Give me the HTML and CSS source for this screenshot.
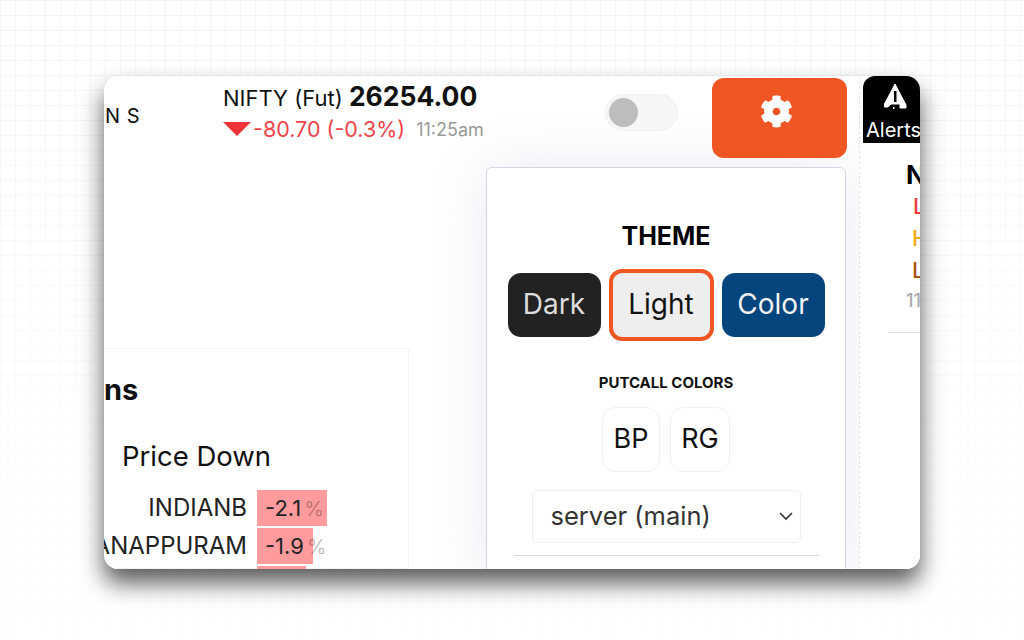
FILE: index.html
```html
<!DOCTYPE html>
<html lang="en">
<head>
  <meta charset="UTF-8"/>
  <title>Settings</title>
  <link rel="stylesheet" href="styles.css">
</head>
<body>
  <div class="window">
    <!-- left column: quote + movers -->
    <div class="col-left">
      <div class="topbar">
        <div class="ticker">N S</div>
        <div class="quote">
          <div class="quote-main">NIFTY (Fut) <b>26254.00</b></div>
          <div class="quote-sub">
            <span class="arrow-down"></span>
            <span class="change">-80.70 (-0.3%)</span>
            <span class="time">11:25am</span>
          </div>
        </div>
      </div>
      <div class="movers">
        <h3 class="movers-title">ns</h3>
        <div class="movers-sub">Price Down</div>
        <div class="mover">
          <span class="name">INDIANB</span>
          <span class="bar bar-a">-2.1<i>%</i></span>
        </div>
        <div class="mover">
          <span class="name">MANAPPURAM</span>
          <span class="bar bar-b">-1.9<i>%</i></span>
        </div>
        <div class="mover">
          <span class="name"></span>
          <span class="bar bar-c"></span>
        </div>
      </div>
    </div>

    <!-- middle column: toggle, settings button, panel -->
    <div class="col-mid">
      <div class="controls">
        <div class="toggle"><span class="knob"></span></div>
        <button class="gear-btn">
          <svg viewBox="0 0 512 512" width="33" height="33"><path fill="#fff" fill-rule="evenodd" d="M487.4 315.7l-42.6-24.6c4.3-23.2 4.3-47 0-70.2l42.6-24.6c4.9-2.8 7.1-8.6 5.5-14-11.1-35.6-30-67.8-54.7-94.6-3.8-4.1-10-5.1-14.8-2.3L380.8 110c-17.9-15.4-38.5-27.3-60.8-35.1V25.8c0-5.6-3.9-10.5-9.4-11.7-36.7-8.2-74.3-7.8-109.2 0-5.5 1.2-9.4 6.1-9.4 11.7V75c-22.2 7.9-42.8 19.8-60.8 35.1L88.7 85.5c-4.9-2.8-11-1.9-14.8 2.3-24.7 26.7-43.6 58.9-54.7 94.6-1.7 5.4.6 11.2 5.5 14L67.3 221c-4.3 23.2-4.3 47 0 70.2l-42.6 24.6c-4.9 2.8-7.1 8.6-5.5 14 11.1 35.6 30 67.8 54.7 94.6 3.8 4.1 10 5.1 14.8 2.3l42.6-24.6c17.9 15.4 38.5 27.3 60.8 35.1v49.2c0 5.6 3.9 10.5 9.4 11.7 36.7 8.2 74.3 7.8 109.2 0 5.5-1.2 9.4-6.1 9.4-11.7v-49.2c22.2-7.9 42.8-19.8 60.8-35.1l42.6 24.6c4.9 2.8 11 1.9 14.8-2.3 24.7-26.7 43.6-58.9 54.7-94.6 1.5-5.5-.7-11.3-5.6-14.1zM256 316c-33 0-60-27-60-60s27-60 60-60 60 27 60 60-27 60-60 60z"/></svg>
        </button>
      </div>
      <div class="panel">
        <h3 class="panel-title">THEME</h3>
        <div class="themes">
          <button class="theme theme-dark">Dark</button>
          <button class="theme theme-light">Light</button>
          <button class="theme theme-color">Color</button>
        </div>
        <h4 class="panel-sub">PUTCALL COLORS</h4>
        <div class="putcall">
          <button class="pc pc-bp">BP</button>
          <button class="pc pc-rg">RG</button>
        </div>
        <div class="server">
          <span>server (main)</span>
          <svg viewBox="0 0 16 16" width="16" height="16"><path d="M2 5l6 6 6-6" fill="none" stroke="#333" stroke-width="1.6"/></svg>
        </div>
        <hr class="panel-rule">
      </div>
    </div>

    <!-- right column, mostly cut off by the window edge -->
    <div class="col-right">
      <div class="alerts">
        <svg viewBox="0 0 24 26" width="24" height="26">
          <path fill="#fff" stroke="#fff" stroke-linejoin="round" d="M12 1L23 22V25H17V21H8L5 24H1.5V21Z"/>
          <path fill="#000" d="M11 8h2.5v11H11z"/>
          <path fill="#fff" d="M10 24h1.5v2H10z"/>
        </svg>
        <span class="alerts-label">Alerts</span>
      </div>
      <div class="news">
        <div class="news-head">N</div>
        <div class="news-red">L</div>
        <div class="news-amber">H</div>
        <div class="news-brown">L</div>
        <div class="news-time">11</div>
        <hr class="news-rule">
      </div>
    </div>
  </div>
</body>
</html>
```

FILE: styles.css
```css
body { margin:0; height:640px; overflow:hidden; font-family:Inter, sans-serif; color:#111;
       background:
         linear-gradient(to bottom, rgba(255,255,255,.2) 0, rgba(255,255,255,.6) 300px, rgba(255,255,255,.9) 640px),
         linear-gradient(#f1f1f1 1px, transparent 1px) 0 0 / 15px 15px,
         linear-gradient(90deg, #f1f1f1 1px, transparent 1px) 0 0 / 15px 15px,
         #fff; }
.window { display:flex; width:816px; height:493px; margin:76px 0 0 104px; overflow:hidden;
          border-radius:14px; background:#fff;
          box-shadow:0 14px 23px rgba(0,0,0,.65) }

.col-left { width:381px; flex:none; display:flex; flex-direction:column }
.topbar { display:flex; flex:none; height:272px }
.ticker { width:119px; padding:27px 0 0 1px; box-sizing:border-box; font-size:20px; line-height:26px; letter-spacing:.5px }
.quote-main { font-size:22px; line-height:26px; margin-top:7px; white-space:nowrap }
.quote-main b { font-size:26.5px; font-weight:700 }
.quote-sub { display:flex; align-items:center; margin-top:4px; white-space:nowrap }
.arrow-down { width:0; height:0; border-style:solid; border-width:14px 14px 0 14px;
              border-color:#ee3338 transparent transparent transparent; margin-right:2px }
.change { color:#f0444a; font-size:21.5px; line-height:28px }
.time { color:#999; font-size:18px; margin-left:11px }

.movers { width:305px; flex:1; min-height:0; border:1px solid #f3f3f3; border-left:none; box-sizing:border-box }
.movers-title { margin:25px 0 0; font-size:29px; line-height:32px; font-weight:700 }
.movers-sub { margin:33px 0 0 18px; font-size:27.5px; line-height:34px }
.mover { display:flex; align-items:stretch; margin-top:2px; font-size:22px; line-height:36px }
.movers-sub + .mover { margin-top:17px }
.name { width:143px; flex:none; display:flex; justify-content:flex-end; white-space:nowrap; color:#222; font-size:24px }
.bar { display:block; margin-left:10px; height:36px; background:#ff9a9d; padding-left:8px; box-sizing:border-box; white-space:nowrap; color:#222 }
.bar i { font-style:normal; font-size:20px; color:rgba(0,0,0,.28); margin-left:3px }
.bar-a { width:70px }
.bar-b { width:56px }
.bar-c { width:49px }

.col-mid { width:374px; flex:none; padding-left:1px; box-sizing:border-box }
.controls { display:flex; align-items:flex-start; height:91px; position:relative; z-index:1 }
.toggle { width:73px; height:37px; margin:18px 0 0 119px; border:1px solid #f0f0f0; border-radius:19px;
          background:#f6f6f6; box-sizing:border-box; display:flex; align-items:center; padding-left:3px }
.knob { width:29px; height:29px; border-radius:50%; background:#bdbdbd }
.gear-btn { width:135px; height:80px; margin:2px 0 0 34px; border:none; border-radius:12px; background:#f05623;
            display:flex; justify-content:center; padding:17px 6px 0 0; box-sizing:border-box }

.panel { width:360px; height:420px; background:#fff; border:1px solid #d9d3e6; border-radius:6px; box-sizing:border-box;
         display:flex; flex-direction:column; align-items:center;
         box-shadow:0 0 60px rgba(120,90,170,.14) }
.panel-title { margin:52px 0 0; font-size:25px; line-height:32px; font-weight:700; color:#000 }
.themes { display:flex; gap:9px; margin-top:17px; align-items:center }
.theme { height:64px; border:1px solid transparent; border-radius:13px; font:28px Inter, sans-serif; padding:0 0 3px; box-sizing:border-box }
.theme-dark { width:93px; background:#222; color:#ddd }
.theme-light { width:105px; height:72px; background:#eee; color:#111; border:4px solid #f05623; margin:0 -1px }
.theme-color { width:103px; background:#03457c; color:#f2f2f2 }
.panel-sub { margin:32px 0 0; font-size:15px; line-height:20px; font-weight:700; color:#111 }
.putcall { display:flex; gap:10px; margin-top:14px }
.pc { height:65px; background:#fff; border:1px solid #f0f0f5; border-radius:13px; font:27px Inter, sans-serif; padding:0 0 3px; color:#111 }
.pc-bp { width:58px }
.pc-rg { width:60px }
.server { width:269px; height:53px; margin-top:18px; border:1px solid #eee; border-radius:6px; box-sizing:border-box;
          display:flex; align-items:center; justify-content:space-between; padding:0 6px 2px 18px; font-size:25.5px; color:#333 }
.panel-rule { width:305px; margin:12px 0 0; border:none; border-top:1px solid #d5dadd }

.col-right { flex:1; min-width:0; border-left:1px dashed #e6e6ea; padding-left:3px; box-sizing:border-box; overflow:hidden;
             background:#fff; position:relative }
.alerts { width:80px; height:67px; background:#000; color:#fff; border-radius:12px 12px 0 0; display:flex; flex-direction:column; align-items:flex-start }
.alerts svg { margin:7px 0 0 20px }
.alerts-label { font-size:20px; line-height:26px; margin:8px 0 0 3px; white-space:nowrap }
.news { padding:17px 0 0 25px; display:flex; flex-direction:column }
.news div { font-size:22px; line-height:32px; font-weight:500 }
.news .news-head { font-size:26px; font-weight:700; line-height:30px; color:#000; margin-left:18px }
.news-red { color:#ee3b42; margin-left:25px }
.news-amber { color:#f0ad10; margin-left:24px }
.news-brown { color:#a9561a; margin-left:24px }
.news .news-time { color:#aaa; font-size:18px; line-height:30px; margin-left:18px }
.news-rule { margin:16px 0 0; border:none; border-top:1px solid #dde3ea }
```
